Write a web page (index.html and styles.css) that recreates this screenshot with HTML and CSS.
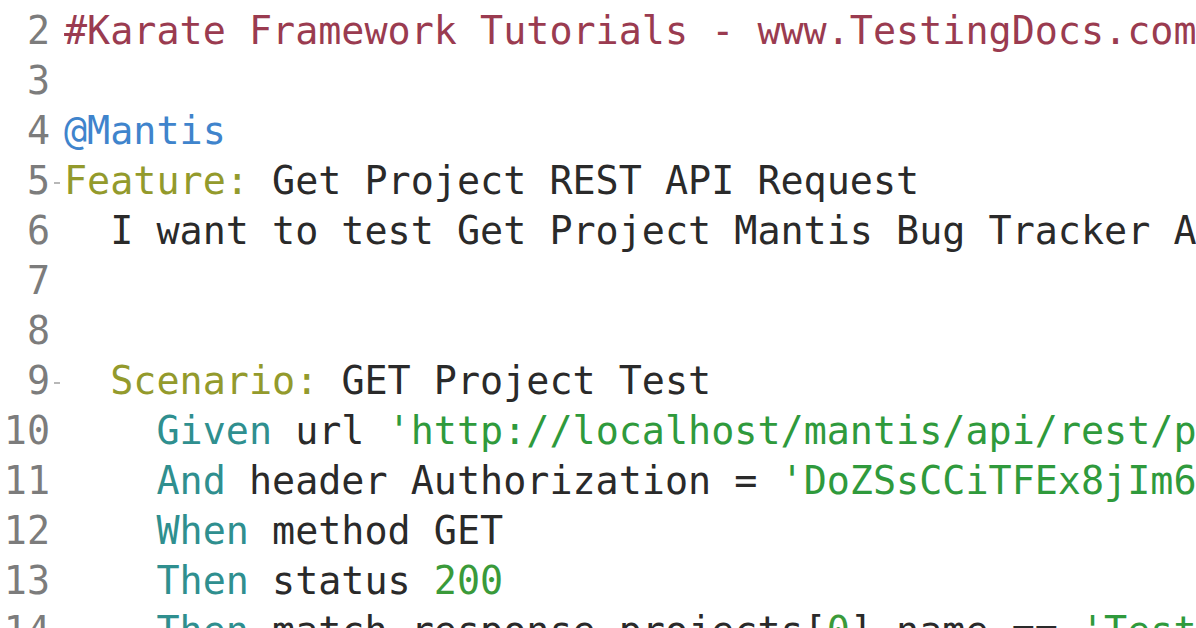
FILE: index.html
```html
<!DOCTYPE html>
<html>
<head>
<meta charset="utf-8">
<link rel="stylesheet" href="styles.css">
</head>
<body>
<div class="editor">
  <div class="line"><span class="num">2</span><span class="fold"></span><span class="code"><span class="comment">#Karate Framework Tutorials - www.TestingDocs.com</span></span></div>
  <div class="line"><span class="num">3</span><span class="fold"></span><span class="code"></span></div>
  <div class="line"><span class="num">4</span><span class="fold"></span><span class="code"><span class="tag">@Mantis</span></span></div>
  <div class="line"><span class="num">5</span><span class="fold"><i class="marker"></i></span><span class="code"><span class="kw">Feature:</span> Get Project REST API Request</span></div>
  <div class="line"><span class="num">6</span><span class="fold"></span><span class="code">  I want to test Get Project Mantis Bug Tracker API</span></div>
  <div class="line"><span class="num">7</span><span class="fold"></span><span class="code"></span></div>
  <div class="line"><span class="num">8</span><span class="fold"></span><span class="code"></span></div>
  <div class="line"><span class="num">9</span><span class="fold"><i class="marker"></i></span><span class="code">  <span class="kw">Scenario:</span> GET Project Test</span></div>
  <div class="line"><span class="num">10</span><span class="fold"></span><span class="code">    <span class="step">Given</span> url <span class="str">'http://localhost/mantis/api/rest/projects'</span></span></div>
  <div class="line"><span class="num">11</span><span class="fold"></span><span class="code">    <span class="step">And</span> header Authorization = <span class="str">'DoZSsCCiTFEx8jIm6kXv'</span></span></div>
  <div class="line"><span class="num">12</span><span class="fold"></span><span class="code">    <span class="step">When</span> method GET</span></div>
  <div class="line"><span class="num">13</span><span class="fold"></span><span class="code">    <span class="step">Then</span> status <span class="numlit">200</span></span></div>
  <div class="line"><span class="num">14</span><span class="fold"></span><span class="code">    <span class="step">Then</span> match response.projects[<span class="numlit">0</span>].name == <span class="str">'Test Project'</span></span></div>
</div>
</body>
</html>
```

FILE: styles.css
```css
html, body {
  margin: 0;
  padding: 0;
  background: #ffffff;
  overflow: hidden;
}

.editor {
  width: 1196px;
  height: 628px;
  overflow: hidden;
  padding-top: 6px;
  box-sizing: border-box;
  font-family: "DejaVu Sans Mono", "Liberation Mono", monospace;
  font-size: 38.4px;
  line-height: 50px;
  color: #2a2a2a;
}

.line {
  display: flex;
  height: 50px;
  white-space: pre;
}

.num {
  flex: 0 0 50px;
  text-align: right;
  color: #7c7c7c;
}

.fold {
  flex: 0 0 14px;
  display: flex;
  align-items: center;
  justify-content: center;
}

.marker {
  display: block;
  width: 6px;
  height: 2px;
  background: #b8b8b8;
  margin-top: 4px;
}

.code {
  flex: 1 1 auto;
  white-space: pre;
  overflow: hidden;
}

.comment { color: #9a3b50; }
.tag { color: #3f84cc; }
.kw { color: #939a2c; }
.step { color: #2f8f8f; }
.str { color: #2f9a3c; }
.numlit { color: #3a9a3a; }
```
